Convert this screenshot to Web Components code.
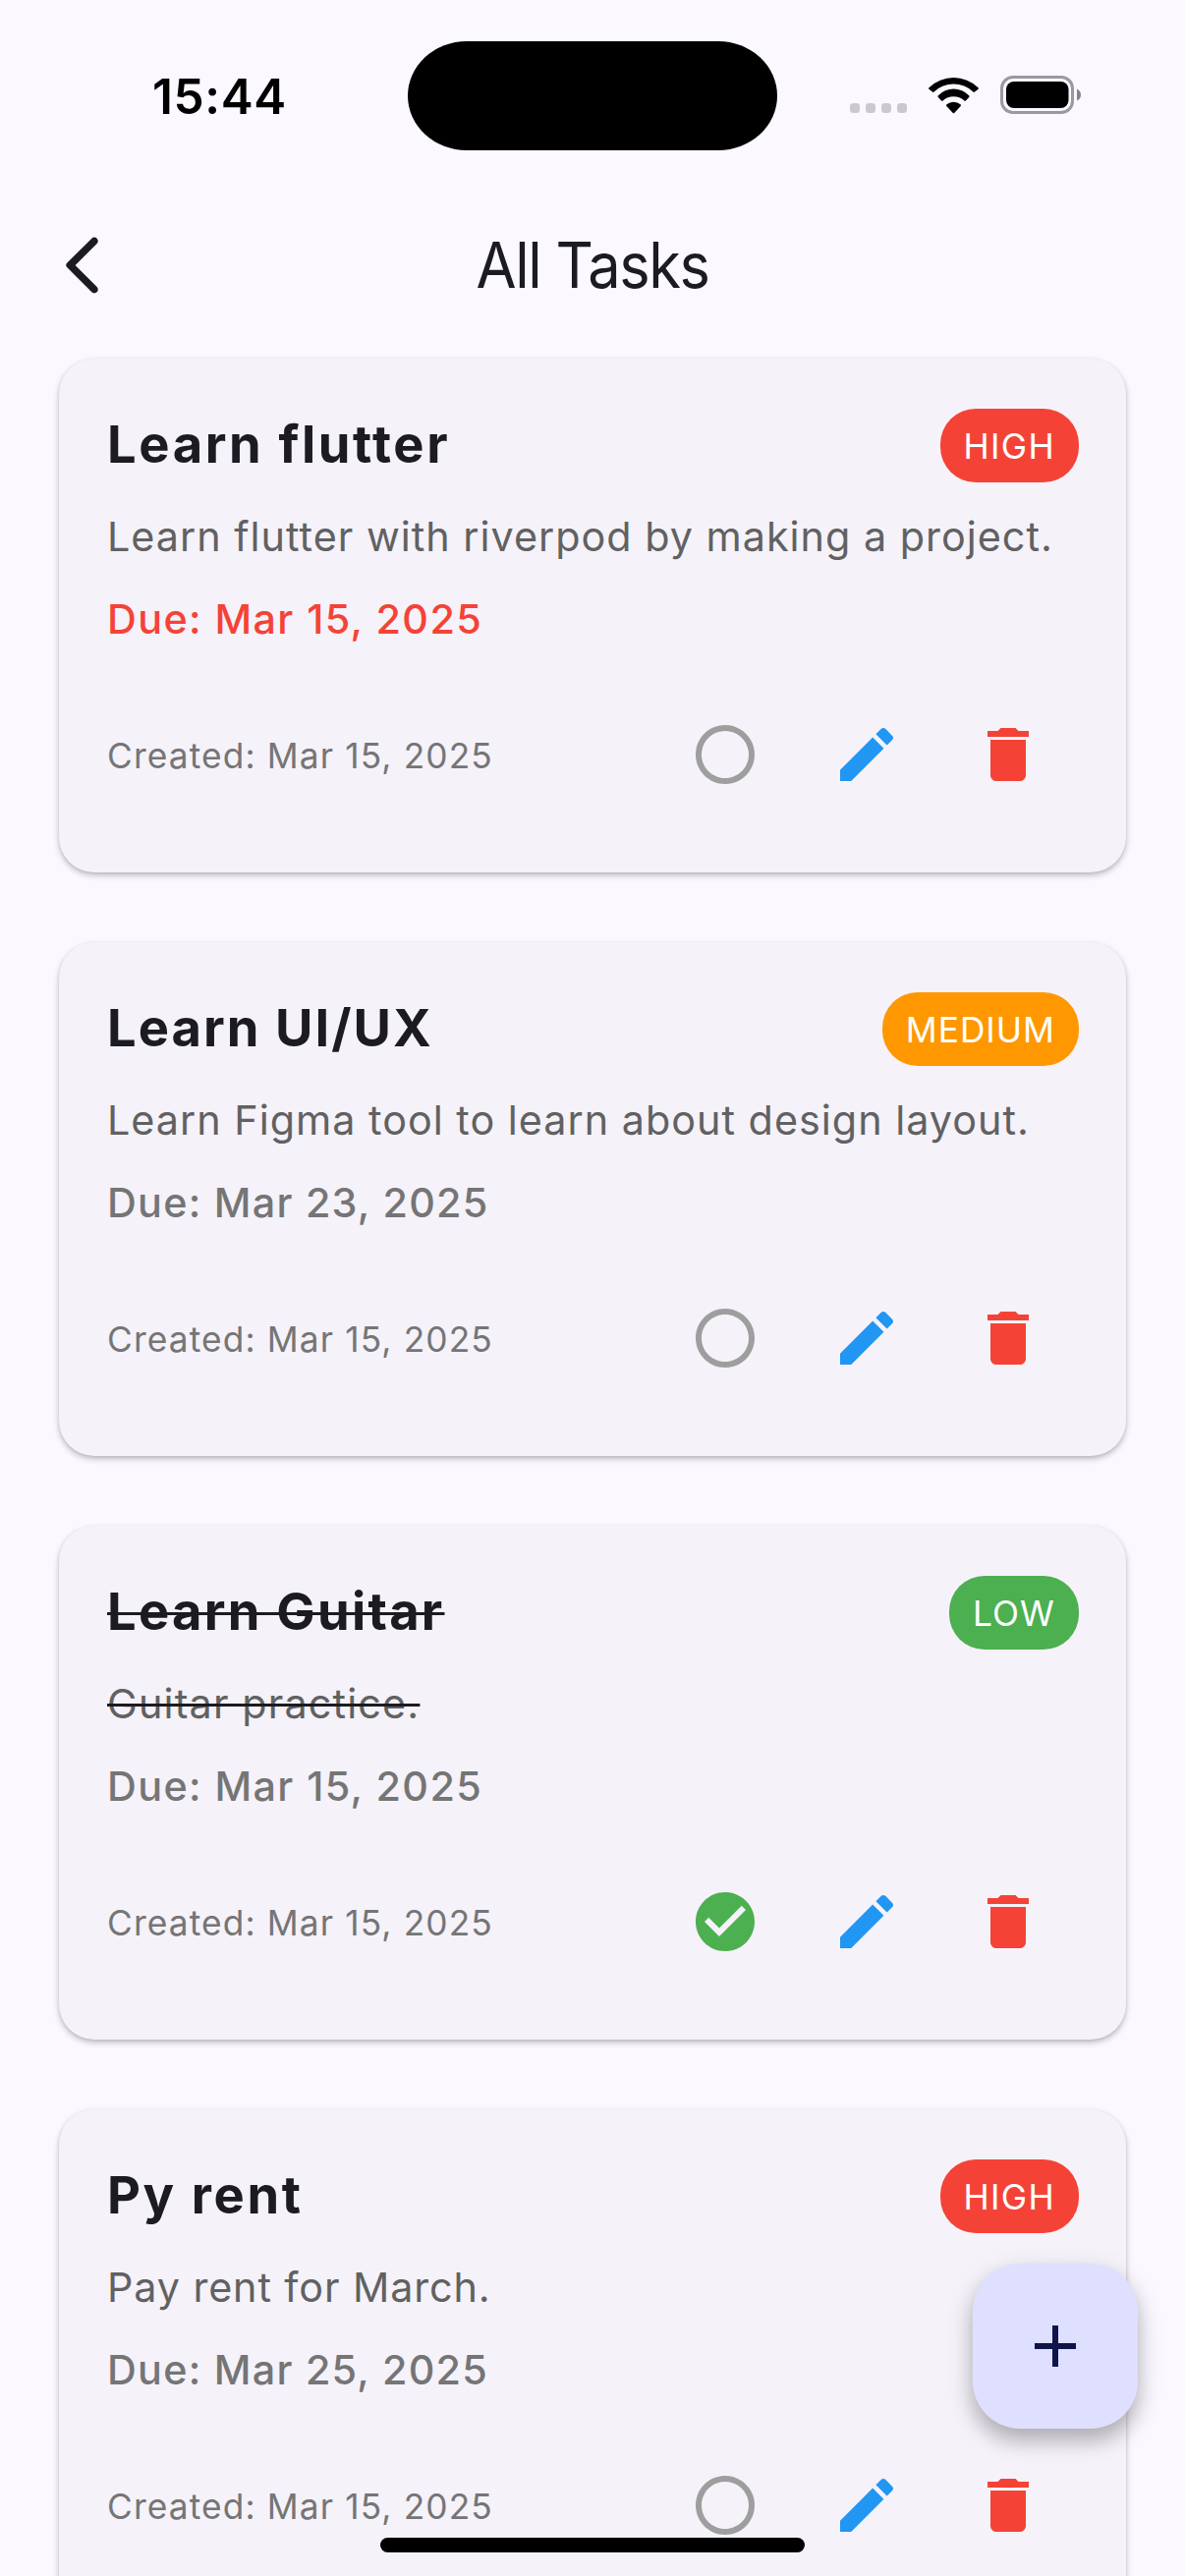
<!DOCTYPE html>
<html lang="en">
<head>
<meta charset="utf-8">
<title>All Tasks</title>
<style>
html,body{margin:0;padding:0}
body{width:1206px;height:2622px;overflow:hidden;background:#fbf8ff;font-family:Inter,"Liberation Sans",sans-serif}
</style>
</head>
<body>
<task-screen>
  <status-bar slot="status">15:44</status-bar>
  <app-header slot="header">All Tasks</app-header>
  <task-card style="--title-track:2.6px;--due-track:1.4px" priority="high" overdue>
    <span slot="title">Learn flutter</span>
    <span slot="desc">Learn flutter with riverpod by making a project.</span>
    <span slot="due">Due: Mar 15, 2025</span>
    <span slot="created">Created: Mar 15, 2025</span>
  </task-card>
  <task-card style="--title-track:2.02px;--due-track:1.26px" priority="medium">
    <span slot="title">Learn UI/UX</span>
    <span slot="desc">Learn Figma tool to learn about design layout.</span>
    <span slot="due">Due: Mar 23, 2025</span>
    <span slot="created">Created: Mar 15, 2025</span>
  </task-card>
  <task-card style="--title-track:2.25px;--desc-track:1.15px;--due-track:1.4px" priority="low" done>
    <span slot="title">Learn Guitar</span>
    <span slot="desc">Guitar practice.</span>
    <span slot="due">Due: Mar 15, 2025</span>
    <span slot="created">Created: Mar 15, 2025</span>
  </task-card>
  <task-card style="--title-track:2.6px;--desc-track:.9px;--due-track:1.26px" priority="high">
    <span slot="title">Py rent</span>
    <span slot="desc">Pay rent for March.</span>
    <span slot="due">Due: Mar 25, 2025</span>
    <span slot="created">Created: Mar 15, 2025</span>
  </task-card>
  <add-button slot="fab"></add-button>
  <home-indicator slot="home"></home-indicator>
</task-screen>
<script>
const define = (name, html) => {
  customElements.define(name, class extends HTMLElement {
    connectedCallback() {
      if (this.shadowRoot) return;
      const template = document.createElement('template');
      template.innerHTML = typeof html === 'function' ? html(this) : html;
      this.attachShadow({ mode: 'open' }).appendChild(template.content.cloneNode(true));
    }
  });
};

const ICONS = {
  back: 'M16.88 2.88c-.49-.49-1.28-.49-1.77 0L6.7 11.29c-.39.39-.39 1.02 0 1.41l8.41 8.41c.49.49 1.28.49 1.77 0s.49-1.28 0-1.77L9.54 12l7.35-7.35c.48-.49.48-1.28-.01-1.77z',
  circle: 'M12 2C6.48 2 2 6.48 2 12s4.48 10 10 10 10-4.48 10-10S17.52 2 12 2zm0 18c-4.42 0-8-3.58-8-8s3.58-8 8-8 8 3.58 8 8-3.58 8-8 8z',
  check: 'M12 2C6.48 2 2 6.48 2 12s4.48 10 10 10 10-4.48 10-10S17.52 2 12 2zm-2 15l-5-5 1.41-1.41L10 14.17l7.59-7.59L19 8l-9 9z',
  edit: 'M3 17.25V21h3.75L17.81 9.94l-3.75-3.75L3 17.25zM20.71 7.04c.39-.39.39-1.02 0-1.41l-2.34-2.34c-.39-.39-1.02-.39-1.41 0l-1.83 1.83 3.75 3.75 1.83-1.83z',
  trash: 'M6 19c0 1.1.9 2 2 2h8c1.1 0 2-.9 2-2V7H6v12zM19 4h-3.5l-1-1h-5l-1 1H5v2h14V4z',
  add: 'M19 13h-6v6h-2v-6H5v-2h6V5h2v6h6v2z'
};

define('md-icon', el => `
  <style>:host{display:block;width:72px;height:72px}svg{display:block;width:72px;height:72px;fill:currentColor}</style>
  <svg viewBox="0 0 24 24"><path d="${ICONS[el.getAttribute('name')]}"/></svg>`);

define('status-bar', `
  <style>
    :host{display:flex;justify-content:space-between;box-sizing:border-box;height:186px;padding-top:41px;color:#000}
    .side{flex:none;width:415px;box-sizing:border-box;height:112px;display:flex;align-items:center}
    .time{padding:2px 0 0 155px;font-weight:600;font-size:49.5px;line-height:60px;letter-spacing:.6px}
    .island{flex:none;width:376px;height:111px;margin-top:.5px;background:#000;border-radius:60px / 55.5px}
    .status{justify-content:flex-end;padding-right:106px}
    svg{display:block;flex:none}
  </style>
  <div class="side time"><slot></slot></div>
  <div class="island"></div>
  <div class="side status">
    <svg width="235" height="40" viewBox="865 78 235 40">
      <g fill="#cbc9cf"><rect x="865" y="106" width="10" height="10" rx="3.5"/><rect x="881" y="106" width="10" height="10" rx="3.5"/><rect x="897" y="106" width="10" height="10" rx="3.5"/><rect x="913" y="106" width="10" height="10" rx="3.5"/></g>
      <g transform="translate(945 79)">
        <path d="M.4 11.2A36.2 36.2 0 0 1 50.6 11.2Q51.3 12 50.6 12.7L47 15.6Q46.2 16.2 45.4 15.5A28.7 28.7 0 0 0 5.6 15.5Q4.8 16.2 4 15.6L.4 12.7Q-.3 12 .4 11.2Z"/>
        <path d="M9.8 19.3A21.5 21.5 0 0 1 41.2 19.3Q42 20.1 41.2 20.9L37.9 24.4Q37.2 25 36.4 24.4A16.2 16.2 0 0 0 14.6 24.4Q13.8 25 13.1 24.4L9.8 20.9Q9 20.1 9.8 19.3Z"/>
        <path d="M18.5 28.3A11 11 0 0 1 32.5 28.3Q33.4 29.1 32.7 29.9L26.2 37Q25.5 37.7 24.8 37L18.3 29.9Q17.6 29.1 18.5 28.3Z"/>
      </g>
      <rect x="1019.5" y="79.5" width="72" height="36" rx="11.5" fill="none" stroke="#9b999f" stroke-width="3"/>
      <rect x="1024" y="84" width="63.5" height="27" rx="8"/>
      <path d="M1096 91.5Q1100 93.5 1100 97.5T1096 103.5Z" fill="#86848a"/>
    </svg>
  </div>`);

define('app-header', `
  <style>
    :host{display:grid;grid-template-columns:168px 1fr 168px;align-items:center;height:168px;color:#1b1b21}
    md-icon{margin-left:48px}
    h1{margin:0;text-align:center;font-weight:380;font-size:64px;line-height:84px;letter-spacing:-1.5px;transform:scaleX(.93)}
  </style>
  <md-icon name="back"></md-icon><h1><slot></slot></h1>`);

define('priority-badge', el => `
  <style>
    :host{display:block;box-sizing:border-box;height:75.5px;margin-top:3px;padding:3px 24px 0;border-radius:36px;color:#fff;font-size:35.3px;font-weight:370;line-height:72.5px;white-space:nowrap}
    :host([level=high]){background:#f44336;letter-spacing:1.3px}
    :host([level=medium]){background:#ff9800;letter-spacing:1px}
    :host([level=low]){background:#4caf50;letter-spacing:1.1px}
  </style><span>${el.getAttribute('level').toUpperCase()}</span>`);

define('task-actions', el => `
  <style>
    :host{display:flex}
    .btn{width:144px;height:144px;display:flex;align-items:center;justify-content:center}
    .state{color:#9e9e9e}
    :host([done]) .state{color:#4caf50}
    .edit{color:#2196f3}
    .trash{color:#f44336}
  </style>
  <div class="btn state"><md-icon name="${el.hasAttribute('done') ? 'check' : 'circle'}"></md-icon></div>
  <div class="btn edit"><md-icon name="edit"></md-icon></div>
  <div class="btn trash"><md-icon name="trash"></md-icon></div>`);

define('task-card', el => `
  <style>
    :host{display:block;box-sizing:border-box;height:523px;padding:48px;border-radius:36px;background:#f5f2fa;flex:none;
      box-shadow:0 3px 6px rgba(0,0,0,.24),0 1px 3px rgba(0,0,0,.08)}
    .head{display:flex;justify-content:space-between;align-items:center;height:78px}
    .title,.desc,.due,.created{padding-left:1px}
    .title{font-size:52.5px;font-weight:700;line-height:78px;color:#1b1b21;letter-spacing:var(--title-track)}
    .desc{margin-top:25px;font-size:41.3px;font-weight:370;line-height:60px;color:#616161;letter-spacing:var(--desc-track,1.01px);white-space:nowrap}
    .due{margin-top:24px;font-size:41.3px;font-weight:480;line-height:60px;color:#757575;letter-spacing:var(--due-track)}
    :host([overdue]) .due{color:#f44336}
    .foot{margin-top:36px;display:flex;justify-content:space-between;align-items:center;height:144px}
    .created{padding-top:4px;font-size:35.3px;font-weight:370;line-height:54px;color:#757575;letter-spacing:1.12px}
    :host([done]) .title,:host([done]) .desc{text-decoration:line-through #1b1b21}
    :host([done]) .title{text-decoration-thickness:3px}
    :host([done]) .desc{text-decoration-thickness:2.5px}
  </style>
  <div class="head"><div class="title"><slot name="title"></slot></div><priority-badge level="${el.getAttribute('priority')}"></priority-badge></div>
  <div class="desc"><slot name="desc"></slot></div>
  <div class="due"><slot name="due"></slot></div>
  <div class="foot"><div class="created"><slot name="created"></slot></div><task-actions${el.hasAttribute('done') ? ' done' : ''}></task-actions></div>`);

define('add-button', `
  <style>
    :host{display:flex;align-items:center;justify-content:center;width:168px;height:168px;border-radius:48px;background:#dfe0ff;color:#0d154b;
      box-shadow:0 9px 30px rgba(0,0,0,.13),0 12px 20px rgba(0,0,0,.2)}
  </style><md-icon name="add"></md-icon>`);

define('home-indicator', `
  <style>:host{display:block;width:432px;height:15px;border-radius:7.5px;background:#000}</style>`);

define('task-screen', `
  <style>
    :host{display:flex;flex-direction:column;position:relative;width:1206px;height:2622px;overflow:hidden;background:#fbf8ff}
    .list{flex:1;min-height:0;display:flex;flex-direction:column;gap:71px;padding:11px 60px 0}
    .fab{position:absolute;right:48px;bottom:150px}
    .home{position:absolute;left:387px;bottom:24px}
  </style>
  <slot name="status"></slot>
  <slot name="header"></slot>
  <div class="list"><slot></slot></div>
  <div class="fab"><slot name="fab"></slot></div>
  <div class="home"><slot name="home"></slot></div>`);
</script>
</body>
</html>
